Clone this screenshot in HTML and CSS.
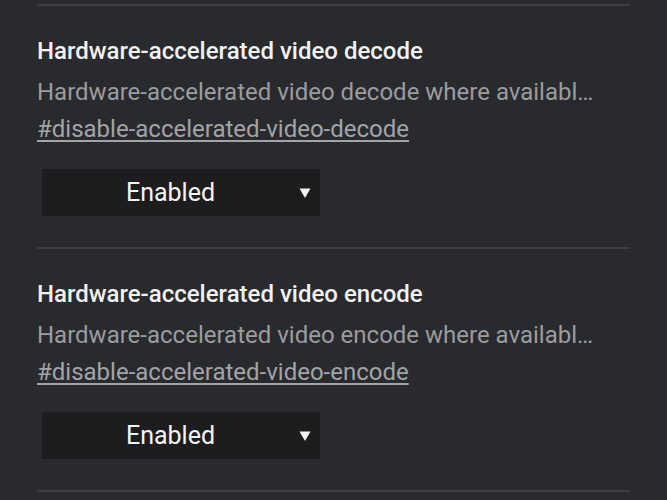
FILE: index.html
```html
<!DOCTYPE html>
<html lang="en">
<head>
<meta charset="utf-8">
<title>Flags</title>
<link rel="stylesheet" href="styles.css">
</head>
<body>
<div class="flags">
  <div class="flag">
    <div class="flag-title">Hardware-accelerated video decode</div>
    <div class="flag-desc">Hardware-accelerated video decode where available.</div>
    <div class="flag-link"><a href="#disable-accelerated-video-decode">#disable-accelerated-video-decode</a></div>
    <div class="select">
      <span class="select-value">Enabled</span>
      <svg class="select-arrow" width="12" height="10" viewBox="0 0 12 10"><path d="M0.5 0.5 H11.5 L6 10 Z" fill="#f2f2f2"/></svg>
    </div>
  </div>
  <div class="flag">
    <div class="flag-title">Hardware-accelerated video encode</div>
    <div class="flag-desc">Hardware-accelerated video encode where available.</div>
    <div class="flag-link"><a href="#disable-accelerated-video-encode">#disable-accelerated-video-encode</a></div>
    <div class="select">
      <span class="select-value">Enabled</span>
      <svg class="select-arrow" width="12" height="10" viewBox="0 0 12 10"><path d="M0.5 0.5 H11.5 L6 10 Z" fill="#f2f2f2"/></svg>
    </div>
  </div>
</div>
</body>
</html>
```

FILE: styles.css
```css
html, body {
  margin: 0;
  padding: 0;
  background: #292a2e;
  height: 100%;
  overflow: hidden;
}
body {
  font-family: Roboto, "Noto Sans", sans-serif;
  padding: 4px 37px 0 37px;
}
.flags {
  width: 593px;
  border-top: 2px solid #3e3f43;
}
.flag {
  padding: 31px 0 31px 0;
  border-bottom: 2px solid #3e3f43;
}
.flag-title {
  font-size: 24px;
  font-weight: 500;
  line-height: 28px;
  color: #f1f1f1;
}
.flag-desc {
  margin-top: 9px;
  font-size: 24px;
  line-height: 36px;
  color: #9b9c9f;
  width: 557px;
  white-space: nowrap;
  overflow: hidden;
  text-overflow: ellipsis;
}
.flag-link {
  margin-top: 1px;
  font-size: 24px;
  line-height: 36px;
}
.flag-link a {
  color: #a3a4a7;
  text-decoration: underline;
  text-underline-offset: 3px;
  text-decoration-thickness: 1.5px;
}
.select {
  margin: 22px 0 0 5px;
  width: 278px;
  height: 47px;
  background: #1d1d1f;
  display: flex;
  align-items: center;
  color: #f4f4f4;
  font-size: 25px;
}
.select-value {
  flex: 1;
  text-align: center;
}
.select-arrow {
  margin-right: 9px;
  margin-top: 1px;
}
```
